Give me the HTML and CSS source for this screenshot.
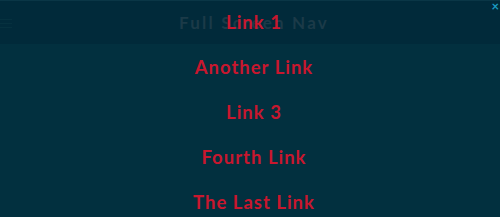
FILE: index.html
```html
<!DOCTYPE html>
<html lang="en">
<head>
    <meta charset="UTF-8">
    <title>Full Screen Nav</title>
    <link rel="stylesheet" href="styles.css">
</head>
<body>
    <header class="site-header">
        <span class="menu-toggle"><i></i><i></i><i></i></span>
        <h1 class="site-title">Full Screen Nav</h1>
    </header>

    <nav class="overlay-nav">
        <a href="#" class="close-btn">&times;</a>
        <ul class="nav-links">
            <li><a href="#">Link 1</a></li>
            <li><a href="#">Another Link</a></li>
            <li><a href="#">Link 3</a></li>
            <li><a href="#">Fourth Link</a></li>
            <li><a href="#">The Last Link</a></li>
        </ul>
    </nav>
</body>
</html>
```

FILE: styles.css
```css
body {
    margin: 0;
    height: 217px;
    background: #02303f;
    font-family: Lato, 'Open Sans', sans-serif;
    overflow: hidden;
}
.site-header {
    height: 44px;
    padding-left: 8px;
    background: #012a3a;
    border-top: 1px solid #0a3646;
    box-sizing: border-box;
    display: flex;
    align-items: center;
    justify-content: center;
    position: relative;
}
.menu-toggle {
    position: absolute;
    left: 0;
    top: 18px;
    display: flex;
    flex-direction: column;
    gap: 3px;
}
.menu-toggle i {
    display: block;
    width: 12px;
    height: 1px;
    background: #06313f;
}
.site-title {
    margin: 0;
    font-size: 17px;
    font-weight: 700;
    letter-spacing: 2.2px;
    color: #1b3a48;
}
.overlay-nav {
    position: absolute;
    top: 0;
    left: 0;
    right: 0;
    bottom: 0;
    overflow: hidden;
}
.close-btn {
    position: absolute;
    top: 0;
    right: 1px;
    color: #1a9cc2;
    font-size: 13px;
    line-height: 12px;
    font-weight: 700;
    text-decoration: none;
}
.nav-links {
    list-style: none;
    margin: 0;
    padding: 9px 0 0 8px;
    text-align: center;
}
.nav-links li {
    height: 45px;
    line-height: 27px;
}
.nav-links a {
    color: #c8172e;
    font-size: 18.5px;
    font-weight: 700;
    letter-spacing: 1px;
    text-decoration: none;
}
```
